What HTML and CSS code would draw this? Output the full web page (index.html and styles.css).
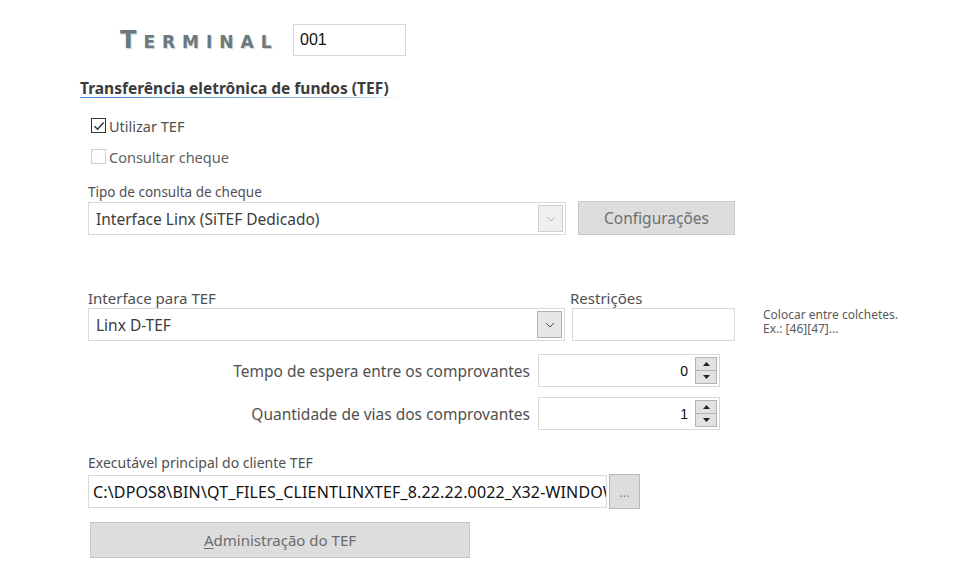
FILE: index.html
```html
<!DOCTYPE html>
<html lang="pt-BR">
<head>
<meta charset="utf-8">
<title>Terminal - TEF</title>
<link rel="stylesheet" href="styles.css">
</head>
<body>
<div class="page">
  <div class="terminal-row">
    <span class="terminal-title">Terminal</span>
    <div class="field terminal-input">001</div>
  </div>

  <div class="section-title">Transferência eletrônica de fundos (TEF)</div>

  <div class="checks">
    <label class="check">
      <span class="box checked">
        <svg width="12" height="12" viewBox="0 0 12 12"><path d="M1.5 6.2 L4.6 9.2 L10.6 2.4" fill="none" stroke="#333" stroke-width="1.5"/></svg>
      </span>
      <span>Utilizar TEF</span>
    </label>
    <label class="check disabled">
      <span class="box"></span>
      <span>Consultar cheque</span>
    </label>
  </div>

  <div class="label lbl-tipo">Tipo de consulta de cheque</div>
  <div class="row">
    <div class="combo combo-cheque disabled">
      <span class="combo-text">Interface Linx (SiTEF Dedicado)</span>
      <span class="combo-btn">
        <svg width="10" height="6" viewBox="0 0 10 6"><path d="M1 1 L5 5 L9 1" fill="none" stroke="#b8b8b8" stroke-width="1"/></svg>
      </span>
    </div>
    <div class="btn btn-config">Configurações</div>
  </div>

  <div class="row labels-row">
    <div class="label lbl-interface">Interface para TEF</div>
    <div class="label lbl-restr">Restrições</div>
  </div>
  <div class="row interface-row">
    <div class="combo combo-interface">
      <span class="combo-text">Linx D-TEF</span>
      <span class="combo-btn">
        <svg width="10" height="6" viewBox="0 0 10 6"><path d="M1 1 L5 5 L9 1" fill="none" stroke="#555" stroke-width="1"/></svg>
      </span>
    </div>
    <div class="field restr-input"></div>
    <div class="hint">
      <div>Colocar entre colchetes.</div>
      <div>Ex.: [46][47]...</div>
    </div>
  </div>

  <div class="spin-row spin-first">
    <div class="spin-label">Tempo de espera entre os comprovantes</div>
    <div class="spin">
      <span class="spin-value">0</span>
      <span class="spin-btns">
        <span class="spin-btn"><svg width="7" height="4" viewBox="0 0 7 4"><path d="M0 4 L3.5 0 L7 4 Z" fill="#222"/></svg></span>
        <span class="spin-btn"><svg width="7" height="4" viewBox="0 0 7 4"><path d="M0 0 L3.5 4 L7 0 Z" fill="#222"/></svg></span>
      </span>
    </div>
  </div>
  <div class="spin-row">
    <div class="spin-label">Quantidade de vias dos comprovantes</div>
    <div class="spin">
      <span class="spin-value">1</span>
      <span class="spin-btns">
        <span class="spin-btn"><svg width="7" height="4" viewBox="0 0 7 4"><path d="M0 4 L3.5 0 L7 4 Z" fill="#222"/></svg></span>
        <span class="spin-btn"><svg width="7" height="4" viewBox="0 0 7 4"><path d="M0 0 L3.5 4 L7 0 Z" fill="#222"/></svg></span>
      </span>
    </div>
  </div>

  <div class="label lbl-exec">Executável principal do cliente TEF</div>
  <div class="row exec-row">
    <div class="field exec-input"><span class="exec-text">C:\DPOS8\BIN\QT_FILES_CLIENTLINXTEF_8.22.22.0022_X32-WINDOW</span></div>
    <div class="btn btn-dots">...</div>
  </div>

  <div class="btn btn-admin"><u>A</u>dministração do TEF</div>
</div>
</body>
</html>
```
FILE: styles.css
```css
* { box-sizing: border-box; }
html, body { margin: 0; padding: 0; background: #ffffff; }
body {
  font-family: "Noto Sans", "Open Sans", sans-serif;
  font-size: 13px;
  color: #505050;
}
.page {
  width: 977px;
  height: 582px;
  padding: 24px 0 0 88px;
  display: flex;
  flex-direction: column;
  align-items: flex-start;
}

.terminal-row {
  display: flex;
  align-items: center;
  margin-left: 32px;
  height: 32px;
}
.terminal-title {
  font-family: "DejaVu Sans", sans-serif;
  font-variant: small-caps;
  text-transform: lowercase;
  font-size: 24px;
  font-weight: bold;
  letter-spacing: 7px;
  color: #6b787e;
  text-shadow: 1px 1px 1px #c5d0d5;
  width: 173px;
  line-height: 32px;
  white-space: nowrap;
}
.terminal-title::first-letter { text-transform: uppercase; }

.field {
  border: 1px solid #d9d9d9;
  background: #fff;
  height: 33px;
}
.terminal-input {
  width: 113px;
  height: 32px;
  display: flex;
  align-items: center;
  padding-left: 6px;
  font-family: "Liberation Sans", sans-serif;
  font-size: 16px;
  color: #111;
}

.section-title {
  margin: 23px 0 0 -8px;
  font-weight: bold;
  font-size: 15.5px;
  color: #3b3b3b;
  padding-bottom: 1px;
  width: 322px;
  line-height: 18px;
  white-space: nowrap;
  background: linear-gradient(to right, #3d8bd4 0%, #9cc4ea 85%, rgba(255,255,255,0) 100%) no-repeat left bottom / 100% 1px;
}

.checks {
  display: flex;
  flex-direction: column;
  gap: 14px;
  margin: 19px 0 0 3px;
}
.check {
  display: flex;
  align-items: center;
  gap: 3px;
  height: 17px;
  font-size: 14.5px;
  color: #505050;
}
.check.disabled { color: #626262; }
.box {
  width: 15px;
  height: 15px;
  border: 1px solid #333;
  display: flex;
  align-items: center;
  justify-content: center;
  background: #fff;
}
.check.disabled .box { border-color: #cfcfcf; }

.label {
  font-size: 14px;
  color: #505050;
  line-height: 17px;
  white-space: nowrap;
}
.lbl-tipo { margin-top: 19px; font-size: 13.5px; }

.row { display: flex; align-items: center; }

.combo {
  width: 478px;
  height: 33px;
  border: 1px solid #d9d9d9;
  background: #fff;
  display: flex;
  align-items: center;
  justify-content: space-between;
  padding: 0 2px 0 7px;
  margin-top: 1px;
}
.combo-text { font-size: 15.5px; color: #3c3c3c; }
.combo-btn {
  width: 25px;
  height: 27px;
  display: flex;
  align-items: center;
  justify-content: center;
  border: 1px solid #b0b0b0;
  background: #e6e6e6;
}
.combo.disabled .combo-btn { border-color: #cfcfcf; background: #efefef; }

.btn {
  display: flex;
  align-items: center;
  justify-content: center;
  background: #dddddd;
  border: 1px solid #c9c9c9;
  color: #6f6f6f;
  font-size: 15.5px;
}
.btn-config {
  width: 157px;
  height: 34px;
  margin-left: 12px;
}

.labels-row { margin-top: 55px; align-items: flex-end; }
.lbl-interface { width: 482px; font-size: 15px; }
.lbl-restr { font-size: 15px; }

.interface-row { margin-top: 1px; align-items: flex-start; }
.combo-interface { width: 477px; margin-top: 0; }
.restr-input { width: 163px; margin-left: 7px; }
.hint {
  margin: 0 0 0 28px;
  font-size: 12px;
  line-height: 14px;
  color: #5a5a5a;
  white-space: nowrap;
}

.spin-row {
  display: flex;
  align-items: center;
  margin-top: 10px;
}
.spin-first { margin-top: 13px; }
.spin-label {
  width: 450px;
  text-align: right;
  font-size: 15.5px;
  color: #505050;
  padding-right: 8px;
  white-space: nowrap;
}
.spin {
  width: 182px;
  height: 33px;
  border: 1px solid #d9d9d9;
  display: flex;
  align-items: center;
  justify-content: flex-end;
  padding-right: 2px;
}
.spin-value {
  font-family: "Liberation Sans", sans-serif;
  font-size: 14px;
  color: #111;
  margin-right: 7px;
}
.spin-btns {
  display: flex;
  flex-direction: column;
  width: 22px;
  height: 27px;
  border: 1px solid #b3b3b3;
  background: #e2e2e2;
}
.spin-btn {
  flex: 1;
  display: flex;
  align-items: center;
  justify-content: center;
}
.spin-btn + .spin-btn { border-top: 1px solid #b3b3b3; }

.lbl-exec { margin-top: 24px; }
.exec-row { margin-top: 3px; }
.exec-input {
  width: 519px;
  overflow: hidden;
  white-space: nowrap;
  display: flex;
  align-items: center;
  padding-left: 4px;
}
.exec-text {
  font-size: 16px;
  color: #111;
  letter-spacing: 0.15px;
}
.btn-dots {
  width: 31px;
  height: 35px;
  margin-left: 2px;
  font-size: 13px;
  color: #8a8a8a;
  border-color: #b9b9b9;
}
.btn-admin {
  width: 380px;
  height: 36px;
  margin: 13px 0 0 2px;
  font-size: 15px;
  color: #6b6b6b;
  border-color: #c6c6c6;
}
.btn-admin u { text-decoration-thickness: 1px; text-underline-offset: 2px; }
```
